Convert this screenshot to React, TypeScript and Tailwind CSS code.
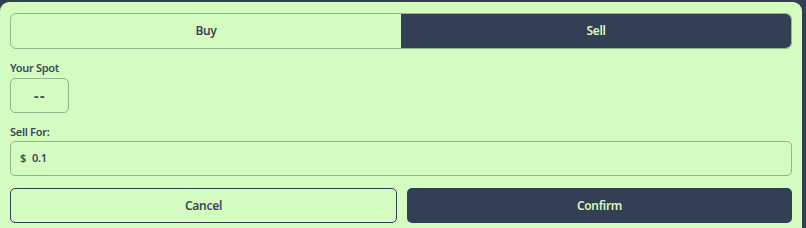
import React from "react";

export default function App() {
  const font = { fontFamily: '"Noto Sans", "Open Sans", sans-serif' };
  return (
    <div className="w-[806px] h-[228px] bg-[#323f55] pt-[2px] pr-[4px] overflow-hidden" style={font}>
      <div className="h-[226px] bg-[#d5fcc0] rounded-t-[9px] px-[10px] pt-[11px] text-[#3b4758] tracking-[-0.3px]">
        <div className="flex h-[36px] rounded-[6px] border border-[#94b58e] overflow-hidden">
          <button className="flex-1 flex items-center justify-center text-[12px] font-semibold text-[#3b4758]">Buy</button>
          <button className="flex-1 flex items-center justify-center text-[12px] font-semibold bg-[#323f55] text-[#d5fcc0] rounded-r-[5px]">Sell</button>
        </div>
        <div className="mt-[12px] text-[11px] font-semibold leading-[14px]">Your Spot</div>
        <div className="mt-[3px] w-[59px] h-[35px] rounded-[5px] border border-[#94b58e] flex items-center justify-center text-[14px] font-bold tracking-[1.5px] pl-[1px]">--</div>
        <div className="mt-[12px] text-[11px] font-semibold leading-[14px]">Sell For:</div>
        <div className="mt-[2px] h-[35px] rounded-[5px] border border-[#94b58e] flex items-center px-[9px] text-[11px] font-semibold">
          <span>$</span>
          <span className="ml-[6px]">0.1</span>
        </div>
        <div className="mt-[12px] flex gap-[10px] h-[35px]">
          <button className="flex-1 rounded-[5px] border-[1.5px] border-[#323f55] flex items-center justify-center text-[12px] font-semibold">Cancel</button>
          <button className="flex-1 rounded-[5px] bg-[#323f55] text-[#d5fcc0] flex items-center justify-center text-[12px] font-semibold">Confirm</button>
        </div>
      </div>
    </div>
  );
}
